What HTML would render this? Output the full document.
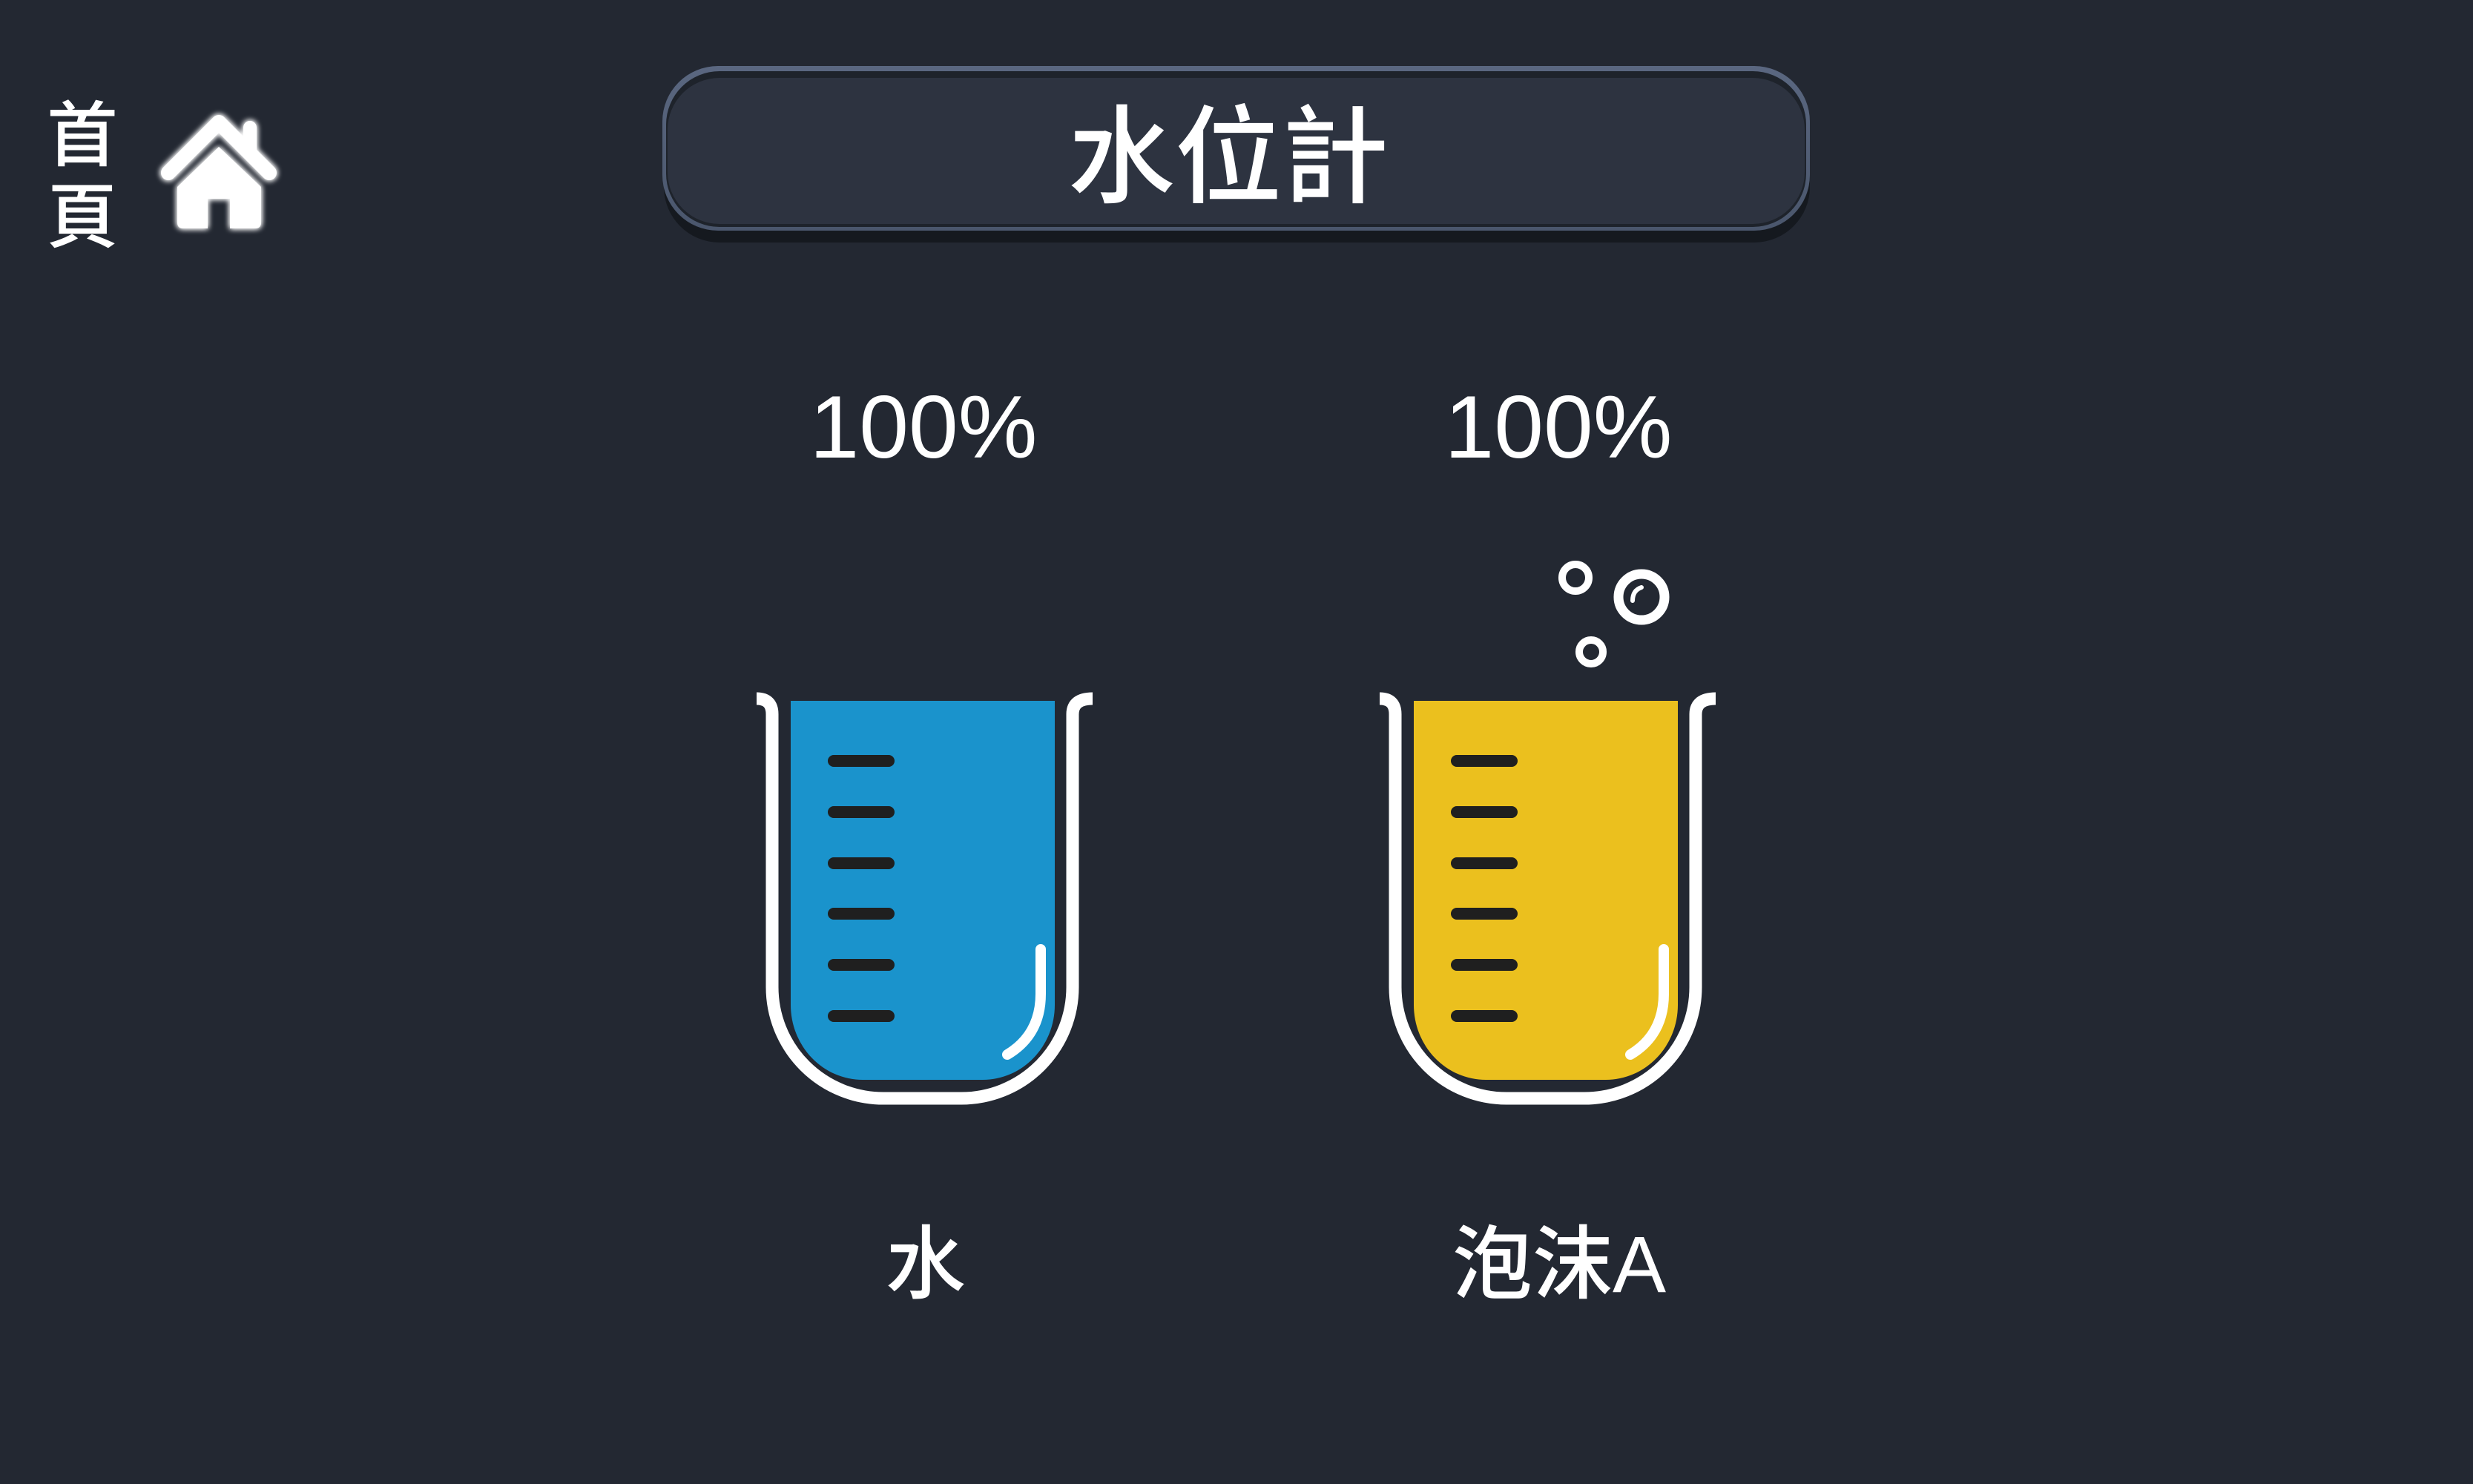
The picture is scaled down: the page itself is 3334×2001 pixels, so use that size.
<!DOCTYPE html>
<html><head><meta charset="utf-8"><style>
html,body{margin:0;padding:0;background:#232832;}
svg{display:block}
</style></head><body>
<svg width="3334" height="2001" viewBox="0 0 3334 2001" xmlns="http://www.w3.org/2000/svg">
<defs>
<linearGradient id="rim" x1="0" y1="0" x2="0" y2="1">
<stop offset="0" stop-color="#5a6780"/><stop offset="1" stop-color="#4a566c"/>
</linearGradient>
<filter id="glow" x="-30%" y="-30%" width="160%" height="160%">
<feGaussianBlur stdDeviation="4" result="b"/>
<feMerge><feMergeNode in="b"/><feMergeNode in="b"/><feMergeNode in="SourceGraphic"/></feMerge>
</filter>
</defs>
<rect width="3334" height="2001" fill="#232832"/>

<!-- title box -->
<rect x="895" y="110" width="1545" height="217" rx="75" fill="#15191f"/>
<rect x="893" y="89" width="1547" height="222" rx="75" fill="url(#rim)"/>
<rect x="898" y="96" width="1537" height="210" rx="72" fill="#1e232b"/>
<rect x="900" y="105" width="1533" height="197" rx="70" fill="#2d3340"/>
<text x="1656" y="262" text-anchor="middle" font-family="'Liberation Sans','Noto Sans CJK TC',sans-serif" font-size="144" fill="#fff" font-weight="500">水位計</text>

<!-- home label -->
<text x="111" y="216" text-anchor="middle" font-family="'Liberation Sans','Noto Sans CJK TC',sans-serif" font-size="96" fill="#fff" font-weight="500">首</text>
<text x="111" y="326" text-anchor="middle" font-family="'Liberation Sans','Noto Sans CJK TC',sans-serif" font-size="96" fill="#fff" font-weight="500">頁</text>

<!-- house -->
<g filter="url(#glow)" fill="#fff" stroke="none">
<path d="M227,233 L295,165 L363,233" fill="none" stroke="#fff" stroke-width="20" stroke-linecap="round" stroke-linejoin="round"/>
<path d="M337,172 V205" stroke="#fff" stroke-width="18" stroke-linecap="round"/>
<path d="M295,198 L352,252 V300 Q352,308 344,308 H310 V268 H280 V308 H247 Q239,308 239,300 V252 Z"/>
</g>

<!-- percentages -->
<g font-family="'Liberation Sans',sans-serif" font-size="120" fill="#fff">
<text x="1245" y="617" text-anchor="middle">100%</text>
<text x="2101" y="617" text-anchor="middle">100%</text>
</g>

<!-- bubbles -->
<g fill="none" stroke="#fff">
<circle cx="2124" cy="779" r="18" stroke-width="10"/>
<circle cx="2213" cy="805" r="31" stroke-width="13"/>
<circle cx="2145" cy="879" r="16" stroke-width="10"/>
<path d="M2201,810 Q2201,796 2213,792" stroke-width="6" stroke-linecap="round"/>
</g>

<!-- beaker 1 -->
<g id="b1">
<path d="M1066,945 H1422 V1355 A97 101 0 0 1 1325,1456 H1163 A97 101 0 0 1 1066,1355 Z" fill="#1a93cc"/>
<g stroke="#1f1f1f" stroke-width="16" stroke-linecap="round">
<path d="M1124,1026 H1198 M1124,1095 H1198 M1124,1164 H1198 M1124,1232 H1198 M1124,1301 H1198 M1124,1370 H1198"/>
</g>
<path d="M1403,1280 V1340 Q1403,1395 1358,1422" fill="none" stroke="#fff" stroke-width="14" stroke-linecap="round"/>
<path d="M1020,942 Q1041,942 1041,963 V1331 A150 150 0 0 0 1191,1481 H1296 A150 150 0 0 0 1446,1331 V963 Q1446,942 1473,942" fill="none" stroke="#fff" stroke-width="17"/>
</g>

<!-- beaker 2 -->
<g transform="translate(840,0)">
<path d="M1066,945 H1422 V1355 A97 101 0 0 1 1325,1456 H1163 A97 101 0 0 1 1066,1355 Z" fill="#ebc01e"/>
<g stroke="#1f1f1f" stroke-width="16" stroke-linecap="round">
<path d="M1124,1026 H1198 M1124,1095 H1198 M1124,1164 H1198 M1124,1232 H1198 M1124,1301 H1198 M1124,1370 H1198"/>
</g>
<path d="M1403,1280 V1340 Q1403,1395 1358,1422" fill="none" stroke="#fff" stroke-width="14" stroke-linecap="round"/>
<path d="M1020,942 Q1041,942 1041,963 V1331 A150 150 0 0 0 1191,1481 H1296 A150 150 0 0 0 1446,1331 V963 Q1446,942 1473,942" fill="none" stroke="#fff" stroke-width="17"/>
</g>

<!-- labels -->
<g font-family="'Liberation Sans','Noto Sans CJK TC',sans-serif" font-size="108" fill="#fff" font-weight="500">
<text x="1248" y="1742" text-anchor="middle">水</text>
<text x="2102" y="1742" text-anchor="middle">泡沫A</text>
</g>
</svg>
</body></html>
